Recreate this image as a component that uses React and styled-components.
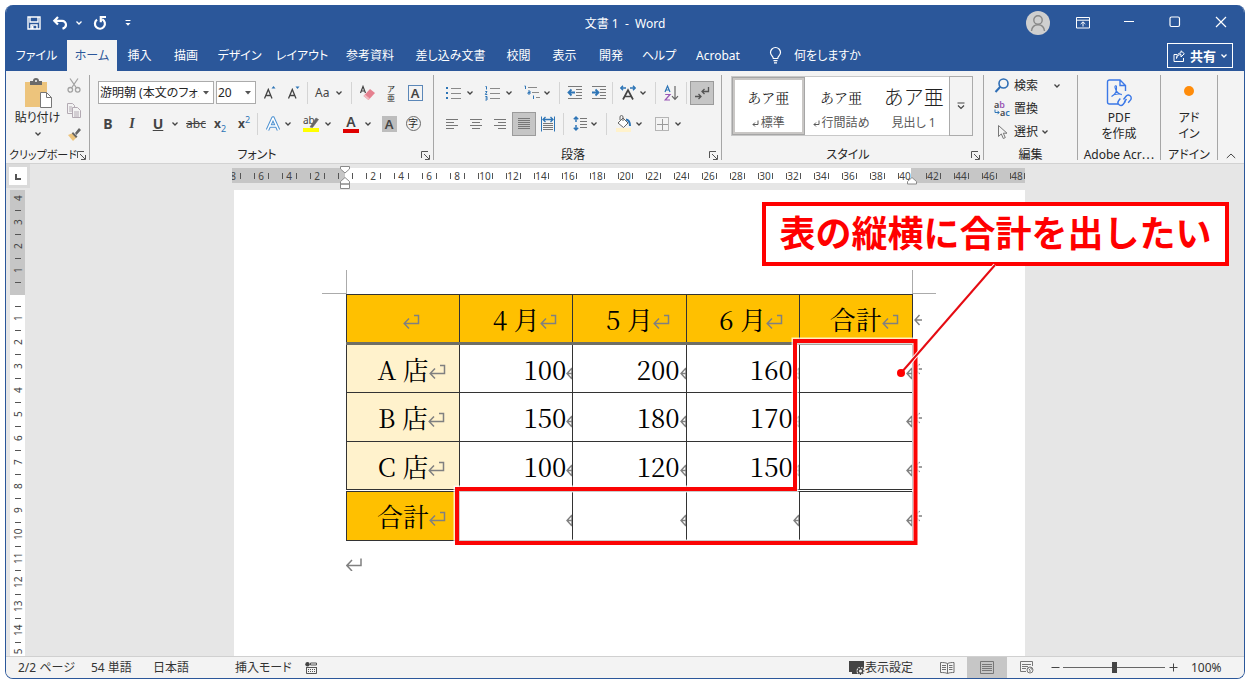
import React from "react";
import styled, { createGlobalStyle, css } from "styled-components";

const BLUE = "#2b579a";
const INK = "#444444";
const RULE = "#c6c6c6";
const RED = "#fb0404";

const GlobalStyle = createGlobalStyle`
  *, *::before, *::after { box-sizing: border-box; }
  body {
    margin: 0;
    background: #ffffff;
    color: #262626;
    font-family: "Noto Sans", "Noto Sans CJK JP", sans-serif;
    font-feature-settings: "palt";
    font-size: 12px;
    line-height: 16px;
  }
  button, input, select {
    font: inherit;
    font-feature-settings: inherit;
    color: inherit;
    margin: 0;
  }
`;

const Screen = styled.div`
  height: 100vh;
  min-height: 400px;
  padding: 5px 7px 7px 5px;
`;

const Window = styled.div`
  height: 100%;
  display: flex;
  flex-direction: column;
  overflow: hidden;
  border: 1px solid ${BLUE};
  border-top: 0;
  border-radius: 8px;
  background: #e6e6e6;
`;

/* ---------- title bar ---------- */

const PlainButton = styled.button`
  display: flex;
  align-items: center;
  justify-content: center;
  padding: 0;
  border: 0;
  background: transparent;
  white-space: nowrap;
`;

const TitleBar = styled.header`
  flex: none;
  height: 35px;
  display: grid;
  grid-template-columns: 1fr auto 1fr;
  align-items: center;
  background: ${BLUE};
  color: #ffffff;
`;

const QuickAccess = styled.div`
  display: flex;
  align-items: center;
  padding-left: 18px;
`;

const QuickButton = styled(PlainButton)`
  width: ${(p) => p.$w}px;
  height: 24px;
`;

const Title = styled.h1`
  margin: 0;
  padding-top: 2px;
  font-size: 12px;
  font-weight: 400;
  white-space: pre;
`;

const WindowControls = styled.div`
  display: flex;
  align-items: center;
  justify-content: flex-end;
`;

const Avatar = styled(PlainButton)`
  width: 24px;
  height: 24px;
  margin-right: 10px;
  border-radius: 50%;
  background: #cfcfcf;
`;

const ControlButton = styled(PlainButton)`
  width: 46px;
  height: 32px;
`;

/* ---------- tabs ---------- */

const TabBar = styled.nav`
  flex: none;
  height: 31px;
  display: flex;
  align-items: stretch;
  background: ${BLUE};
  color: #ffffff;
`;

const Tab = styled(PlainButton)`
  width: ${(p) => p.$w}px;
  ${(p) =>
    p.$active &&
    css`
      background: #f3f3f3;
      color: ${BLUE};
    `}
`;

const TellMe = styled(PlainButton)`
  gap: 12px;
  padding-left: 17px;
`;

const ShareButton = styled(PlainButton)`
  width: 66px;
  height: 25px;
  margin: 3px 11px 0 auto;
  gap: 5px;
  border: 1px solid #ffffff;
  font-size: 13px;
  font-weight: 700;
`;

/* ---------- ribbon ---------- */

const Ribbon = styled.div`
  flex: none;
  display: grid;
  grid-template-columns: 84px 344px 288px 1fr 94px 83px 57px 26px;
  height: 93px;
  background: #f3f3f3;
  border-bottom: 1px solid #d2d2d2;
`;

const Group = styled.section`
  position: relative;
  display: flex;
  flex-direction: column;
  justify-content: space-between;
  min-width: 0;
  padding: 6px 0 0 6px;

  &::after {
    content: "";
    position: absolute;
    right: 0;
    top: 4px;
    bottom: 3px;
    width: 1px;
    background: #a6a6a6;
  }
`;

const GroupFoot = styled.div`
  display: flex;
  align-items: center;
  justify-content: space-between;
  height: 16px;
  margin-left: -6px;
  padding: 0 4px 0 3px;
`;

const GroupName = styled.span`
  flex: 1;
  text-align: center;
  white-space: nowrap;
  font-size: ${(p) => (p.$narrow ? 11 : 12)}px;
`;

const Row = styled.div`
  display: flex;
  align-items: center;
  height: 31px;
  padding-left: ${(p) => p.$inset || 0}px;
`;

const Tool = styled(PlainButton)`
  flex: none;
  width: 24px;
  height: 24px;
  ${(p) =>
    p.$pressed &&
    css`
      background: #c5c5c5;
      border: 1px solid #9b9b9b;
    `}
`;

const DropTool = styled(PlainButton)`
  flex: none;
  width: ${(p) => p.$w}px;
  height: 24px;
  justify-content: space-between;
  padding: 0 6px;
`;

const Divider = styled.span`
  flex: none;
  width: ${(p) => p.$w}px;
  height: 22px;
  display: flex;
  justify-content: center;
  &::before {
    content: "";
    width: 1px;
    background: #d4d4d4;
  }
`;

const Combo = styled.label`
  display: flex;
  align-items: center;
  gap: 4px;
  width: ${(p) => p.$w}px;
  height: 23px;
  margin-right: 2px;
  padding: 0 4px 0 1px;
  border: 1px solid #ababab;
  background: #ffffff;
`;

const ComboSelect = styled.select`
  flex: 1;
  min-width: 0;
  height: 21px;
  padding: 0;
  border: 0;
  appearance: none;
  background: transparent;
  overflow: hidden;
`;

const Letter = styled.span`
  min-width: ${(p) => (p.$line === "underline" ? 16 : 0)}px;
  font-size: 14px;
  line-height: 16px;
  color: ${INK};
  font-weight: ${(p) => (p.$bold ? 700 : 400)};
  font-style: ${(p) => (p.$italic ? "italic" : "normal")};
  font-family: ${(p) => (p.$italic ? '"Liberation Serif", serif' : "inherit")};
  text-decoration: ${(p) => p.$line || "none"};
`;

const SmallLetter = styled(Letter)`
  font-size: 12px;
`;

const Script = styled.span`
  font-size: 9px;
  line-height: 9px;
  color: #2e75b6;
  align-self: ${(p) => (p.$up ? "flex-start" : "flex-end")};
  padding: 3px 0;
`;

const BarLetter = styled.span`
  width: 16px;
  font-size: 14px;
  line-height: 14px;
  font-weight: 600;
  color: ${INK};
  text-align: center;
  border-bottom: 4px solid ${(p) => p.$bar};
`;

const BoxLetter = styled.span`
  width: 15px;
  height: 16px;
  font-size: 13px;
  line-height: 14px;
  font-weight: 600;
  text-align: center;
  color: ${INK};
  border: 1px solid ${(p) => (p.$shade ? "#bdbdbd" : "#5b87b8")};
  background: ${(p) => (p.$shade ? "#bdbdbd" : "transparent")};
`;

const RoundLetter = styled.span`
  width: 15px;
  height: 15px;
  border: 1px solid #6a6a6a;
  border-radius: 50%;
  font-size: 10px;
  line-height: 12px;
  text-align: center;
`;

const Ruby = styled.span`
  display: flex;
  flex-direction: column;
  align-items: center;
  font-size: 8px;
  line-height: 9px;
`;

const Clipboard = styled.div`
  display: flex;
  padding-left: 1px;
`;

const BigButton = styled(PlainButton)`
  flex-direction: column;
  justify-content: flex-start;
  width: ${(p) => p.$w}px;
  height: 66px;
`;

const BigArt = styled.span`
  display: flex;
  align-items: center;
  justify-content: center;
  height: 33px;
`;

const BigCaption = styled.span`
  line-height: 16px;
  white-space: pre-line;
`;

const ToolColumn = styled.div`
  display: flex;
  flex-direction: column;
  margin-top: -3px;
`;

const Gallery = styled.div`
  display: flex;
  height: 60px;
  margin: -1px 11px 0 3px;
  border: 1px solid #c8c8c8;
  background: #ffffff;
`;

const StyleCard = styled.button`
  flex: 1;
  display: flex;
  flex-direction: column;
  align-items: center;
  justify-content: space-between;
  min-width: 0;
  padding: 4px 0 1px;
  border: 3px solid ${(p) => (p.$active ? "#c9c7c5" : "transparent")};
  outline: ${(p) => (p.$active ? "1px solid #a6a6a6" : "0")};
  outline-offset: -1px;
  background: transparent;
  white-space: nowrap;
`;

const StyleSample = styled.span`
  height: 26px;
  line-height: 26px;
  font-family: ${(p) =>
    p.$large ? '"Noto Sans CJK JP", sans-serif' : '"Noto Serif CJK JP", "Noto Sans CJK JP", serif'};
  font-feature-settings: normal;
  font-weight: ${(p) => (p.$large ? 300 : 400)};
  font-size: ${(p) => (p.$large ? 20 : 14)}px;
  color: #222222;
`;

const StyleName = styled.span`
  display: flex;
  align-items: center;
  gap: 2px;
  color: #595959;
`;

const GalleryMore = styled(PlainButton)`
  flex: none;
  width: 24px;
  margin: -1px;
  border: 1px solid #ababab;
  background: #f3f3f3;
`;

const EditButton = styled(PlainButton)`
  justify-content: flex-start;
  height: 23px;
  gap: 4px;
  padding-left: 4px;
`;

const EditLabel = styled.span`
  padding-right: ${(p) => (p.$wide ? 12 : 0)}px;
`;

const CollapseButton = styled(PlainButton)`
  align-self: end;
  height: 14px;
`;

/* ---------- workspace ---------- */

const Workspace = styled.main`
  flex: 1;
  min-height: 0;
  display: flex;
  overflow: hidden;
`;

const LeftRail = styled.div`
  flex: none;
  width: 24px;
  display: flex;
  flex-direction: column;
`;

const TabStop = styled(PlainButton)`
  flex: none;
  width: 24px;
  height: 24px;
  margin-bottom: 2px;
  border: 3px solid #dadada;
  background: #ffffff;
`;

const VRuler = styled.div`
  flex: 1;
  min-height: 0;
  width: 15px;
  margin-left: 4px;
  overflow: hidden;
  background: #ffffff;
`;

const VSection = styled.div`
  padding: ${(p) => (p.$dark ? "2px 0 7px" : "5px 0 0")};
  background: ${(p) => (p.$dark ? RULE : "#ffffff")};
`;

const VMark = styled.span`
  display: flex;
  align-items: center;
  justify-content: center;
  width: 15px;
  height: 12px;
  font-size: 10px;
  line-height: 12px;
  color: ${INK};
  writing-mode: vertical-rl;
  transform: rotate(180deg);
`;

const VTick = styled.span`
  display: flex;
  align-items: center;
  justify-content: center;
  height: 12px;
  &::before {
    content: "";
    width: 6px;
    height: 1px;
    background: #555555;
  }
`;

const Canvas = styled.div`
  flex: 1;
  min-width: 0;
  display: flex;
  justify-content: center;
  padding: 4px 17px 0 0;
`;

const DocColumn = styled.div`
  flex: none;
  width: 793px;
  display: flex;
  flex-direction: column;
`;

const HRuler = styled.div`
  position: relative;
  flex: none;
  display: flex;
  height: 15px;
  margin-bottom: 7px;
`;

const HSection = styled.div`
  flex: ${(p) => (p.$grow ? "1" : "none")};
  width: ${(p) => (p.$grow ? "auto" : p.$w + "px")};
  min-width: 0;
  display: flex;
  justify-content: ${(p) => (p.$end ? "flex-end" : "flex-start")};
  padding-left: ${(p) => p.$pad || 0}px;
  overflow: hidden;
  background: ${(p) => (p.$dark ? RULE : "#ffffff")};
`;

const HCell = styled.span`
  flex: none;
  width: 28px;
  display: flex;
  align-items: center;
  justify-content: center;
  font-size: 10px;
  line-height: 14px;
  padding-top: 1px;
  color: ${INK};
`;

const HTick = styled.span`
  flex: none;
  width: 1px;
  height: 6px;
  background: #555555;
`;

const HNumber = styled.span`
  width: 13px;
  display: flex;
  justify-content: center;
`;

const HHalf = styled.span`
  flex: none;
  width: 14px;
  display: flex;
  align-items: center;
  justify-content: center;
`;

const IndentMarker = styled.svg`
  position: absolute;
  top: -3px;
  left: ${(p) => p.$x}px;
`;

const Page = styled.article`
  position: relative;
  flex: 1;
  margin-left: 2px;
  padding: 80px 89px 0 88px;
  background: #ffffff;
`;

const CropRow = styled.div`
  display: flex;
  justify-content: space-between;
  height: 24px;
`;

const CropMark = styled.span`
  width: ${(p) => (p.$right ? 24 : 25)}px;
  border-bottom: 1px solid #ababab;
  border-left: ${(p) => (p.$right ? "1px solid #ababab" : "0")};
  border-right: ${(p) => (p.$right ? "0" : "1px solid #ababab")};
`;

const TableRow = styled.div`
  display: flex;
  padding-left: 24px;
`;

const SalesTable = styled.table`
  flex: none;
  width: 567px;
  table-layout: fixed;
  border-collapse: collapse;
  font-family: "Noto Serif CJK JP", "Liberation Serif", "Noto Sans CJK JP", serif;
  font-feature-settings: normal;
  font-size: 26px;
  line-height: 32px;
  font-weight: 400;
  color: #000000;

  tr { height: 49px; }
  tbody tr:last-child { height: 50px; }
  thead th, thead td { border-bottom: 3px solid #6f6f66; }
  tbody tr:nth-last-child(2) > * { border-bottom: 3px double #333333; }
`;

const cell = css`
  padding: 0;
  border: 1px solid #333333;
  overflow: hidden;
  font-weight: 400;
  white-space: nowrap;
`;

const HeadCell = styled.th`
  ${cell}
  text-align: center;
  background: ${(p) => (p.$light ? "#fff2cc" : "#ffc000")};
`;

const NumCell = styled.td`
  ${cell}
  text-align: right;
  padding-right: 6px;
`;

const RowEnds = styled.div`
  display: flex;
  flex-direction: column;
  padding-top: 1px;
`;

const RowEnd = styled.span`
  display: flex;
  align-items: center;
  height: 49px;
`;

const MarkSvg = styled.svg`
  display: inline-block;
  margin-right: -17px;
  vertical-align: 0;
`;

const Paragraph = styled.p`
  margin: 0;
  padding: 14px 0 0 24px;
  line-height: 24px;
`;

const Callout = styled.div`
  position: absolute;
  left: 528px;
  top: 12px;
  width: 467px;
  height: 64px;
  display: flex;
  align-items: center;
  justify-content: center;
  padding-bottom: 6px;
  border: 4px solid #ff0000;
  background: #ffffff;
  color: #ff0000;
  font-family: "Noto Sans CJK JP", sans-serif;
  font-feature-settings: normal;
  font-size: 36px;
  line-height: 50px;
  font-weight: 700;
  white-space: nowrap;
`;

const Markup = styled.svg`
  position: absolute;
  left: 0;
  top: 0;
  pointer-events: none;
`;

/* ---------- status bar ---------- */

const StatusBar = styled.footer`
  flex: none;
  display: flex;
  align-items: center;
  height: 22px;
  padding-left: 12px;
  border-top: 1px solid #d0d0d0;
  background: #f3f3f3;
  color: #333333;
`;

const StatusButton = styled(PlainButton)`
  justify-content: flex-start;
  min-width: ${(p) => p.$w}px;
  height: 21px;
`;

const StatusRight = styled.div`
  display: flex;
  align-items: center;
  margin-left: auto;
`;

const ViewButton = styled(PlainButton)`
  width: 40px;
  height: 21px;
  background: ${(p) => (p.$active ? "#c6c6c6" : "transparent")};
`;

const ZoomStep = styled(PlainButton)`
  width: 16px;
  height: 21px;
`;

const ZoomSlider = styled.input`
  width: 102px;
  height: 16px;
  appearance: none;
  background: transparent;
  &::-webkit-slider-runnable-track {
    height: 1px;
    background: #666666;
  }
  &::-webkit-slider-thumb {
    appearance: none;
    width: 5px;
    height: 11px;
    margin-top: -5px;
    background: #444444;
  }
`;

const ZoomValue = styled.span`
  width: 63px;
  padding-left: 10px;
`;

/* ---------- drawings ---------- */

const Svg = ({ w = 16, h = 16, children, vb, ...rest }) => (
  <svg width={w} height={h} viewBox={vb || `0 0 ${w} ${h}`} fill="none" stroke={INK} overflow="visible" aria-hidden="true" {...rest}>
    {children}
  </svg>
);

const Chevron = ({ color = INK, w = 6 }) => (
  <Svg w={w} h={6} vb="0 0 6 6" stroke={color} strokeWidth="1.3"><path d="M.5 1.5 3 4 5.5 1.5" /></Svg>
);
const Triangle = () => (
  <Svg w={6} h={4} stroke="none" fill="#555"><path d="M0 0h6L3 3.5z" /></Svg>
);
const Launcher = () => (
  <Svg w={9} h={9} stroke="#555"><path d="M.5 7V.5H7M3 3l5 5M8.5 4v4.5H4" /></Svg>
);
const Save = () => (
  <Svg w={14} h={14} stroke="#fff" strokeWidth="1.4"><path d="M1 1h12v12H1z" /><path d="M3 1v5h8V1M4 13V9h6v4" /><path d="M5.5 10v3" strokeWidth="2" /></Svg>
);
const Undo = () => (
  <Svg w={16} h={14} stroke="#fff" strokeWidth="2.2"><path d="M6 1 2.300 4.800 6 8.500M2.500 4.800h7.500a3.900 3.900 0 0 1 4 4c0 2-1.200 3.200-3.500 4" /></Svg>
);
const Redo = () => (
  <Svg w={14} h={15} stroke="#fff" strokeWidth="2.2"><path d="M9.200 4.300a5 5 0 1 1-5.200.400M13 2H7.800v5.200" /></Svg>
);
const Customize = () => (
  <Svg w={6} h={8} stroke="#fff"><path d="M.5 1.500h5" /><path d="M.5 4h5L3 6.800z" fill="#fff" stroke="none" /></Svg>
);
const Person = () => (
  <Svg w={20} h={20} stroke="#888" strokeWidth="1.400"><circle cx="10" cy="7" r="4.200" /><path d="M3.500 18c.5-4.500 3-6.300 6.500-6.300s6 1.800 6.500 6.300" /></Svg>
);
const RibbonMode = () => (
  <Svg w={14} h={12} stroke="#fff"><path d="M.5.5h13v10.500H.5zM.5 3.200h13M7 9.500V5M4.700 7 7 4.800 9.300 7" /></Svg>
);
const Minimize = () => <Svg w={12} h={4} stroke="#fff"><path d="M1 .5h10" /></Svg>;
const Maximize = () => <Svg w={12} h={12} stroke="#fff" strokeWidth="1.200"><rect x="1" y="0" width="9.500" height="9.500" rx="1.500" /></Svg>;
const Close = () => <Svg w={12} h={12} stroke="#fff" strokeWidth="1.200"><path d="M1 0 11 10M11 0 1 10" /></Svg>;
const Bulb = () => (
  <Svg w={13} h={17} stroke="#fff" strokeWidth="1.200"><path d="M4.300 11.500C4.300 9 1.500 8.500 1.500 5.500a5 5 0 0 1 10 0c0 3-2.800 3.500-2.800 6zM4.500 13.700h4M5 15.800h3" /></Svg>
);
const Share = () => (
  <Svg w={12} h={12} stroke="#fff"><path d="M4 4.500H1v7h9.500V8M3.500 8.500C4 5.500 6 4.500 8 4.500V7l3.300-3.300L8 .8v2C5 3 3.500 5.500 3.500 8.500z" /></Svg>
);

const Paste = () => (
  <Svg w={30} h={32}>
    <path d="M2 4h22v25H2z" fill="#edc47c" stroke="none" />
    <path d="M7 7V3h3a3 3 0 0 1 6 0h3v4z" fill="#6a6a6a" stroke="none" />
    <circle cx="13" cy="3" r="1" fill="#f3f3f3" stroke="none" />
    <path d="M17.500 14.500h6l5 5v10h-11z" fill="#fff" stroke="#777" />
    <path d="M23.500 14.500v5h5" stroke="#777" />
  </Svg>
);
const Scissors = () => (
  <Svg w={14} h={16} stroke="#a3a3a3" strokeWidth="1.300"><path d="M3 .5 9.500 10M11 .5 4.500 10" /><circle cx="3.300" cy="11.800" r="2.300" /><circle cx="10.700" cy="11.800" r="2.300" /></Svg>
);
const Copy = () => (
  <Svg w={14} h={15} stroke="#b3aab3"><path d="M.5.5h5l2 2v8h-7zM2 4h3M2 6h3M2 8h3" /><path d="M5.500 4.500h5l3 3v7h-8z" fill="#f3f3f3" /><path d="M7 9h5M7 11h5M7 13h5" /></Svg>
);
const Brush = () => (
  <Svg w={14} h={14} stroke="none"><path d="m1 8 5-2 4 4-4 4z" fill="#edc47c" /><path d="m6 5 4.500 4.500L9 11 4.800 6.500zM8 6l4-5 2 2-4.500 5z" fill="#666" /></Svg>
);

const GrowFont = ({ down }) => (
  <Svg w={14} h={16} strokeWidth="1.300"><path d="M1.500 13.500 5.300 4.500l3.700 9M2.900 10.500h4.800" /><path d={down ? "M8.500 1.500h4L10.500 4z" : "M8.500 3.500h4L10.500 1z"} fill="#2e75b6" stroke="none" /></Svg>
);
const Eraser = () => (
  <Svg w={16} h={16}><path d="M1.500 8 4 1.500 6.500 8M2.400 6h3.200" strokeWidth="1.200" /><path d="m4.500 11 6.500-7 5 4-6.500 7z" fill="#e5808f" stroke="none" /><path d="m4.500 11 1.500-1.500 4.800 4L9.500 15z" fill="#f3b9c0" stroke="none" /></Svg>
);
const GlowA = () => (
  <Svg w={16} h={16} strokeLinejoin="round"><path d="M2.500 14 8 2l5.500 12M4.800 10h6.400" stroke="#4f93d2" strokeWidth="3.600" /><path d="M2.500 14 8 2l5.500 12M4.800 10h6.400" stroke="#fff" strokeWidth="1.600" /></Svg>
);
const Pen = () => (
  <Svg w={16} h={18}>
    <text x="0" y="9" fontSize="10" fill={INK} stroke="none">ab</text>
    <path d="m7 12 6-9 2.500 1.500-6 8z" fill="#666" stroke="#666" strokeWidth=".6" />
    <path d="M0 13h16v4H0z" fill="#ffff00" stroke="none" />
  </Svg>
);

const Bullets = () => (
  <Svg><path d="M5 3.500h10M5 8.500h10M5 13.500h10" stroke="#8a8a8a" /><path d="M0 2h2v2H0zM0 7h2v2H0zM0 12h2v2H0z" fill="#2e75b6" stroke="none" /></Svg>
);
const Numbers = () => (
  <Svg><path d="M5 3.500h10M5 8.500h10M5 13.500h10" stroke="#8a8a8a" /><path d="M.5 1.500h1v3M.3 6.500h1.700l-1.700 3h2M.3 11.500h1.700v3.500H.3M.5 13H2" stroke="#2e75b6" strokeWidth="1" /></Svg>
);
const Multi = () => (
  <Svg><path d="M4 2.500h9M8 7.500h7M12 12.500h4" stroke="#8a8a8a" /><path d="M.5 1h1v3M4 6h2v3H4V7.500h2M9.500 10.500v3.500" stroke="#2e75b6" strokeWidth="1" /></Svg>
);
const Indent = ({ right }) => (
  <Svg>
    <path d="M1 1.500h14M9 4.500h6M9 7.500h6M9 10.500h6M1 13.500h14" stroke="#7a7a7a" />
    <path d={right ? "M1 7.500h6M4.500 4.500l3 3-3 3" : "M8 7.500H1.500M4.500 4.500l-3 3 3 3"} stroke="#2e75b6" strokeWidth="1.800" />
  </Svg>
);
const FitA = () => (
  <Svg><path d="M3 14.500 8 5l5 9.500M4.800 11.500h6.400" strokeWidth="1.700" /><path d="M.8 3H6M3 .8.800 3 3 5.200M15.200 3H10M13 .8 15.200 3 13 5.200" stroke="#2e75b6" strokeWidth="1.400" /></Svg>
);
const Sort = () => (
  <Svg w={15} h={16}><path d="M1 7 3.500 1 6 7M1.800 5h3.400" stroke="#2e75b6" strokeWidth="1.200" /><path d="M1.200 9.500H6L1.200 15H6" stroke="#9a57b5" strokeWidth="1.200" /><path d="M11 1v13M8 11.200 11 14.300l3-3.100" stroke="#666" strokeWidth="1.200" /></Svg>
);
const Marks = () => (
  <Svg stroke="#555" strokeWidth="1.300"><path d="M14.500 2v4.500H8M10.500 4 8 6.500 10.500 9M1 11.500h6M4.500 9 7 11.500 4.500 14" /></Svg>
);
const Align = ({ kind }) => {
  const d = {
    left: "M1 3.500h12M1 6.500h8M1 9.500h12M1 12.500h8",
    center: "M1 3.500h12M3 6.500h8M1 9.500h12M3 12.500h8",
    right: "M1 3.500h12M5 6.500h8M1 9.500h12M5 12.500h8",
    full: "M1 2.500h12M1 4.500h12M1 6.500h12M1 8.500h12M1 10.500h12M1 12.500h12",
  }[kind];
  return <Svg w={14} h={15} stroke="#777"><path d={d} /></Svg>;
};
const Distribute = () => (
  <Svg w={16} h={16}><path d="M1.500.5v15M14.500.5v15" stroke="#2e75b6" /><path d="M3 7.500h10M3 9.500h10M3 11.500h10M3 13.500h10" stroke="#777" /><path d="M3 3.500h10M5.500 1 3 3.500 5.500 6M10.500 1 13 3.500 10.500 6" stroke="#2e75b6" strokeWidth="1.300" /></Svg>
);
const LineSpace = () => (
  <Svg><path d="M7 2.500h7M7 5.500h7M7 8.500h7M7 11.500h7" stroke="#777" /><path d="M3 1v5M.800 3.200 3 1l2.200 2.200M3 9v5M.800 11.800 3 14l2.200-2.200" stroke="#2e75b6" strokeWidth="1.500" /></Svg>
);
const Bucket = () => (
  <Svg w={16} h={18}><path d="M0 13h15v4H0z" fill="#fff2cc" stroke="none" /><path d="m2 8 5-5 5 5-4.500 4.500z" fill="#fff" stroke="#666" /><path d="M7 6V2a1.500 1.500 0 0 0-3 0v3" stroke="#666" /><path d="M10 4.500c3 .5 4 2.500 4 6.500" stroke="#2e75b6" strokeWidth="2" /></Svg>
);
const Borders = () => (
  <Svg w={16} h={16} stroke="#777"><path d="M1.500 1.500h13v13h-13z" strokeDasharray="1 1" /><path d="M8.500 3v11M3 8.500h11" stroke="#999" /></Svg>
);
const ReturnSmall = () => (
  <Svg w={7} h={7} stroke="#595959"><path d="M6 .5v4H1M3 2.500 1 4.500l2 2" /></Svg>
);
const MoreStyles = () => <Svg w={8} h={8}><path d="M.5 1h7M1 3.500 4 6.500l3-3" strokeWidth="1.200" /></Svg>;

const Search = () => (
  <Svg w={16} h={16} stroke="#2f6eb5" strokeWidth="1.600"><circle cx="9.500" cy="5.500" r="4.500" /><path d="M6.300 8.800 1.500 14" strokeWidth="2" /></Svg>
);
const Replace = () => (
  <Svg w={16} h={18}>
    <text x="0" y="8" fontSize="9" fontWeight="600" fill={INK} stroke="none">a<tspan fill="#9a57b5">b</tspan></text>
    <text x="6" y="16" fontSize="9" fontWeight="600" fill={INK} stroke="none">a<tspan fill="#2e75b6">c</tspan></text>
    <path d="M1 9.500v3h4M3.500 10.800l1.700 1.700-1.700 1.700" stroke="#2e75b6" />
  </Svg>
);
const Pointer = () => (
  <Svg w={16} h={16} stroke="#777"><path d="M4.500 1.500v11l2.800-2.600 2 4.600 2-.9-2-4.400h3.700z" /></Svg>
);
const Pdf = () => (
  <Svg w={28} h={30} stroke="#3b78e7" strokeWidth="1.400">
    <path d="M13 25H4.500a2 2 0 0 1-2-2V3a2 2 0 0 1 2-2H15l5.500 5.500V12M15 1v5.500h5.500" />
    <path d="M6.500 17.500c4-2 5.500-5.500 5-9.500 0-2-2-1.500-1.500.5.800 3.200 3 6.500 7 7.200M6.500 17.500c2.500-2.500 6-3 10-2.200" strokeWidth="1.100" />
    <path d="m18.500 20.500 2.500-3.200a2.900 2.900 0 0 1 4.600 3.600l-2.400 2.900M21.500 20l-2.200 3M20.500 22.300l-2.300 3a2.900 2.900 0 0 1-4.600-3.600l1.700-2.200" />
  </Svg>
);
const OrangeDot = () => <Svg w={12} h={18} stroke="none"><circle cx="6" cy="6" r="5" fill="#ff8c0a" /></Svg>;
const Collapse = () => <Svg w={10} h={6}><path d="m.8 5 4.200-4 4.200 4" /></Svg>;
const TabL = () => <Svg w={8} h={8} stroke="#555" strokeWidth="2"><path d="M2 2v5h5" /></Svg>;

const MacroIcon = () => (
  <Svg w={13} h={12} stroke="#555"><path d="M1.500 5v6.500h10V5M5.500 1h6v2h-6zM1.500 5.500h10" /><path d="M3 7.500h8M3 9.500h8" strokeDasharray="1 1" /><circle cx="2.500" cy="2.200" r="2.200" fill="#444" stroke="none" /></Svg>
);
const Display = () => (
  <Svg w={16} h={15} stroke="none"><path d="M0 1h15v11H0z" fill="#444" /><path d="M3 12h6v2H3z" fill="#444" /><circle cx="11.500" cy="11" r="3.900" fill="#f3f3f3" /><circle cx="11.500" cy="11" r="2.200" stroke="#444" strokeWidth="1.400" fill="none" /><path d="M11.500 7v1.500M11.500 13.500V15M7.500 11H9M14 11h1.500M8.700 8.200l1 1M13.300 12.800l1 1M14.300 8.200l-1 1M9.700 12.800l-1 1" stroke="#444" strokeWidth="1.200" /></Svg>
);
const ReadView = () => (
  <Svg w={15} h={12} stroke="#6f6f6f"><path d="M7.500 1.500C5.500.500 3 .500.500.500v10c2.500 0 5 0 7 1 2-1 4.500-1 6.500-1V.500c-2 0-4.500 0-6.500 1zv10M2 3.500h4M2 5.500h4M2 7.500h4M9 3.500h3.500M9 5.500h3.500M9 7.500h3.500" /></Svg>
);
const PrintView = () => (
  <Svg w={14} h={13} stroke="#777"><path d="M.500.500h13v12H.500zM2 3.500h10M2 5.500h10M2 7.500h10M2 9.500h10" /></Svg>
);
const WebView = () => (
  <Svg w={14} h={13} stroke="#777"><path d="M12.500 5V.500H.500v10H6M2 3.500h9M2 5.500h6M2 7.500h4" /><circle cx="10" cy="9" r="3" fill="#f3f3f3" /><path d="M8.500 7.500 10 9v2M11 6.500V8h1.500" /></Svg>
);

const ReturnMark = () => (
  <MarkSvg width="17" height="16" viewBox="0 0 17 16" fill="none" stroke="#808080" strokeWidth="1.500" aria-hidden="true">
    <path d="M11 1.500h4.500v8H1.500M6 4.500l-4.800 5 4.800 5" />
  </MarkSvg>
);
const ParagraphMark = () => (
  <MarkSvg width="17" height="16" viewBox="0 0 17 16" fill="none" stroke="#808080" strokeWidth="1.500" aria-hidden="true">
    <path d="M15 3.500v7H1M6 5 .9 10.500 6 16" />
  </MarkSvg>
);
const CellMark = () => (
  <MarkSvg width="17" height="16" viewBox="0 0 17 16" fill="none" stroke="#808080" strokeWidth="1.400" aria-hidden="true">
    <path d="M6 4 1 9.500 6 15M1 9.500h14M6 4v11" />
  </MarkSvg>
);

/* ---------- data ---------- */

const tabs = [
  ["ファイル", 61], ["ホーム", 50], ["挿入", 45], ["描画", 48], ["デザイン", 59], ["レイアウト", 66],
  ["参考資料", 70], ["差し込み文書", 91], ["校閲", 45], ["表示", 47], ["開発", 46], ["ヘルプ", 50], ["Acrobat", 68],
];
const months = [4, 5, 6];
const shops = [
  ["A", [100, 200, 160]],
  ["B", [150, 180, 170]],
  ["C", [100, 120, 150]],
];
const evens = (from, to) => Array.from({ length: (to - from) / 2 + 1 }, (_, i) => from + i * 2);
const upTo = (n) => Array.from({ length: n }, (_, i) => i + 1);

const Drop = ({ w, label, children }) => (
  <DropTool $w={w} aria-label={label}>{children}<Chevron /></DropTool>
);
const Foot = ({ name, launcher, narrow }) => (
  <GroupFoot><GroupName $narrow={narrow}>{name}</GroupName>{launcher && <Launcher />}</GroupFoot>
);
const RulerCells = ({ values }) =>
  values.map((n) => (
    <HCell key={n}><HTick /><HNumber>{n}</HNumber><HTick /></HCell>
  ));

function RibbonPanel() {
  return (
    <Ribbon>
      <Group>
        <Clipboard>
          <BigButton $w={49}>
            <BigArt><Paste /></BigArt>
            <BigCaption>貼り付け</BigCaption>
            <Svg w={6} h={12} strokeWidth="1.300"><path d="M.5 6.500 3 9l2.500-2.500" /></Svg>
          </BigButton>
          <ToolColumn>
            <Tool aria-label="切り取り"><Scissors /></Tool>
            <Tool aria-label="コピー"><Copy /></Tool>
            <Tool aria-label="書式のコピー"><Brush /></Tool>
          </ToolColumn>
        </Clipboard>
        <Foot name="クリップボード" launcher narrow />
      </Group>

      <Group>
        <div>
          <Row $inset={2}>
            <Combo $w={116}>
              <ComboSelect aria-label="フォント"><option>游明朝 (本文のフォント)</option></ComboSelect><Triangle />
            </Combo>
            <Combo $w={40}>
              <ComboSelect aria-label="フォント サイズ"><option>20</option></ComboSelect><Triangle />
            </Combo>
            <Tool aria-label="拡大"><GrowFont /></Tool>
            <Tool aria-label="縮小"><GrowFont down /></Tool>
            <Divider $w={3} />
            <Drop w={39} label="文字種の変換"><SmallLetter>Aa</SmallLetter></Drop>
            <Divider $w={7} />
            <Tool aria-label="書式のクリア"><Eraser /></Tool>
            <Tool aria-label="ルビ"><Ruby><span>ア</span><span>亜</span></Ruby></Tool>
            <Tool aria-label="囲み線"><BoxLetter>A</BoxLetter></Tool>
          </Row>
          <Row>
            <Tool><Letter $bold>B</Letter></Tool>
            <Tool><Letter $bold $italic>I</Letter></Tool>
            <Drop w={40} label="下線"><Letter $bold $line="underline">U</Letter></Drop>
            <Tool><SmallLetter $line="line-through">abc</SmallLetter></Tool>
            <Tool><SmallLetter $bold>x</SmallLetter><Script>2</Script></Tool>
            <Tool><SmallLetter $bold>x</SmallLetter><Script $up>2</Script></Tool>
            <Divider $w={3} />
            <Drop w={38} label="文字の効果"><GlowA /></Drop>
            <Drop w={40} label="蛍光ペン"><Pen /></Drop>
            <Drop w={40} label="フォントの色"><BarLetter $bar="#e00000">A</BarLetter></Drop>
            <Tool><BoxLetter $shade>A</BoxLetter></Tool>
            <Tool><RoundLetter>字</RoundLetter></Tool>
          </Row>
        </div>
        <Foot name="フォント" launcher />
      </Group>

      <Group>
        <div>
          <Row>
            <Drop w={39} label="箇条書き"><Bullets /></Drop>
            <Drop w={39} label="段落番号"><Numbers /></Drop>
            <Drop w={38} label="アウトライン"><Multi /></Drop>
            <Divider $w={7} />
            <Tool aria-label="インデントを減らす"><Indent /></Tool>
            <Tool aria-label="インデントを増やす"><Indent right /></Tool>
            <Divider $w={3} />
            <Drop w={38} label="拡張書式"><FitA /></Drop>
            <Divider $w={7} />
            <Tool aria-label="並べ替え"><Sort /></Tool>
            <Divider $w={7} />
            <Tool $pressed aria-label="編集記号の表示"><Marks /></Tool>
          </Row>
          <Row>
            <Tool aria-label="左揃え"><Align kind="left" /></Tool>
            <Tool aria-label="中央揃え"><Align kind="center" /></Tool>
            <Tool aria-label="右揃え"><Align kind="right" /></Tool>
            <Tool $pressed aria-label="両端揃え"><Align kind="full" /></Tool>
            <Tool aria-label="均等割り付け"><Distribute /></Tool>
            <Divider $w={7} />
            <Drop w={36} label="行間"><LineSpace /></Drop>
            <Divider $w={7} />
            <Drop w={38} label="塗りつぶし"><Bucket /></Drop>
            <Drop w={39} label="罫線"><Borders /></Drop>
          </Row>
        </div>
        <Foot name="段落" launcher />
      </Group>

      <Group>
        <Gallery>
          <StyleCard $active><StyleSample>あア亜</StyleSample><StyleName><ReturnSmall />標準</StyleName></StyleCard>
          <StyleCard><StyleSample>あア亜</StyleSample><StyleName><ReturnSmall />行間詰め</StyleName></StyleCard>
          <StyleCard><StyleSample $large>あア亜</StyleSample><StyleName>見出し 1</StyleName></StyleCard>
          <GalleryMore aria-label="その他"><MoreStyles /></GalleryMore>
        </Gallery>
        <Foot name="スタイル" launcher />
      </Group>

      <Group>
        <ToolColumn>
          <EditButton><Search /><EditLabel $wide>検索</EditLabel><Chevron /></EditButton>
          <EditButton><Replace /><EditLabel>置換</EditLabel></EditButton>
          <EditButton><Pointer /><EditLabel>選択</EditLabel><Chevron /></EditButton>
        </ToolColumn>
        <Foot name="編集" />
      </Group>

      <Group>
        <BigButton $w={70}><BigArt><Pdf /></BigArt><BigCaption>{"PDF\nを作成"}</BigCaption></BigButton>
        <Foot name="Adobe Acr⋯" />
      </Group>

      <Group>
        <BigButton $w={44}><BigArt><OrangeDot /></BigArt><BigCaption>{"アド\nイン"}</BigCaption></BigButton>
        <Foot name="アドイン" />
      </Group>

      <CollapseButton aria-label="リボンを折りたたむ"><Collapse /></CollapseButton>
    </Ribbon>
  );
}

function Sales() {
  return (
    <TableRow>
      <SalesTable>
        <thead>
          <tr>
            <HeadCell as="td"><ReturnMark /></HeadCell>
            {months.map((m) => (
              <HeadCell key={m} scope="col">{m} 月<ReturnMark /></HeadCell>
            ))}
            <HeadCell scope="col">合計<ReturnMark /></HeadCell>
          </tr>
        </thead>
        <tbody>
          {shops.map(([name, sales]) => (
            <tr key={name}>
              <HeadCell scope="row" $light>{name} 店<ReturnMark /></HeadCell>
              {sales.map((v, i) => <NumCell key={i}>{v}<CellMark /></NumCell>)}
              <NumCell><CellMark /></NumCell>
            </tr>
          ))}
          <tr>
            <HeadCell scope="row">合計<ReturnMark /></HeadCell>
            {upTo(4).map((i) => <NumCell key={i}><CellMark /></NumCell>)}
          </tr>
        </tbody>
      </SalesTable>
      <RowEnds>
        {upTo(5).map((i) => (
          <RowEnd key={i}>
            <Svg w={10} h={14} stroke="#808080" strokeWidth="1.400"><path d="M6.500 2 2 7l4.500 5M2 7h7" /></Svg>
          </RowEnd>
        ))}
      </RowEnds>
    </TableRow>
  );
}

function Annotation() {
  const outline = "M561 151H681.500V353H223V299H561Z";
  return (
    <>
      <Callout>表の縦横に合計を出したい</Callout>
      <Markup width="791" height="370" viewBox="0 0 791 370" fill="none" aria-hidden="true">
        <path d={outline} stroke="#ffffff" strokeOpacity=".75" strokeWidth="7" />
        <path d={outline} stroke={RED} strokeWidth="4" />
        <path d="M761 75 667 183" stroke="#ffffff" strokeWidth="4" />
        <path d="M761 75 667 183" stroke="#e50b12" strokeWidth="2" />
        <circle cx="667" cy="183" r="4" fill="#ff0000" />
      </Markup>
    </>
  );
}

export default function App() {
  return (
    <Screen>
      <GlobalStyle />
      <Window>
        <TitleBar>
          <QuickAccess>
            <QuickButton $w={20} aria-label="保存"><Save /></QuickButton>
            <QuickButton $w={32} aria-label="元に戻す"><Undo /></QuickButton>
            <QuickButton $w={6} aria-label="元に戻す履歴"><Chevron color="#fff" /></QuickButton>
            <QuickButton $w={36} aria-label="やり直し"><Redo /></QuickButton>
            <QuickButton $w={20} aria-label="カスタマイズ"><Customize /></QuickButton>
          </QuickAccess>
          <Title>{"文書 1  -  Word"}</Title>
          <WindowControls>
            <Avatar aria-label="アカウント"><Person /></Avatar>
            <ControlButton aria-label="リボンの表示"><RibbonMode /></ControlButton>
            <ControlButton aria-label="最小化"><Minimize /></ControlButton>
            <ControlButton aria-label="最大化"><Maximize /></ControlButton>
            <ControlButton aria-label="閉じる"><Close /></ControlButton>
          </WindowControls>
        </TitleBar>

        <TabBar>
          {tabs.map(([name, w]) => (
            <Tab key={name} $w={w} $active={name === "ホーム"}>{name}</Tab>
          ))}
          <TellMe><Bulb />何をしますか</TellMe>
          <ShareButton><Share />共有<Chevron color="#fff" /></ShareButton>
        </TabBar>

        <RibbonPanel />

        <Workspace>
          <LeftRail>
            <TabStop aria-label="タブ"><TabL /></TabStop>
            <VRuler>
              <VSection $dark>
                {[4, 3, 2, 1].map((n) => <React.Fragment key={n}><VMark>{n}</VMark><VTick /></React.Fragment>)}
              </VSection>
              <VSection>
                {upTo(15).map((n) => <React.Fragment key={n}><VTick /><VMark>{n}</VMark></React.Fragment>)}
              </VSection>
            </VRuler>
          </LeftRail>
          <Canvas>
            <DocColumn>
              <HRuler>
                <HSection $dark $end $w={113}>
                  <RulerCells values={[8, 6, 4, 2]} />
                  <HHalf><HTick /></HHalf>
                </HSection>
                <HSection $w={566}>
                  <HHalf><HTick /></HHalf>
                  <RulerCells values={evens(2, 40)} />
                </HSection>
                <HSection $dark $grow $pad={8}>
                  <RulerCells values={evens(42, 48)} />
                </HSection>
                <IndentMarker $x={108} width="10" height="25" viewBox="0 0 10 25" fill="#fff" stroke="#8a8a8a" aria-hidden="true">
                  <path d="M.5 1.500h9V4L5 8 .5 4zM5 12.500l4.500 4v2.500H.5v-2.500zM.5 19h9v4.500h-9z" />
                </IndentMarker>
                <IndentMarker $x={675} width="10" height="25" viewBox="0 0 10 25" fill="#fff" stroke="#8a8a8a" aria-hidden="true">
                  <path d="m5 12.500 4.500 4v2.500H.5v-2.500z" />
                </IndentMarker>
              </HRuler>
              <Page>
                <CropRow><CropMark /><CropMark $right /></CropRow>
                <Sales />
                <Paragraph><ParagraphMark /></Paragraph>
                <Annotation />
              </Page>
            </DocColumn>
          </Canvas>
        </Workspace>

        <StatusBar>
          <StatusButton $w={73}>2/2 ページ</StatusButton>
          <StatusButton $w={62}>54 単語</StatusButton>
          <StatusButton $w={82}>日本語</StatusButton>
          <StatusButton $w={70}>挿入モード</StatusButton>
          <StatusButton aria-label="マクロの記録"><MacroIcon /></StatusButton>
          <StatusRight>
            <StatusButton $w={78}><Display />表示設定</StatusButton>
            <ViewButton aria-label="閲覧モード"><ReadView /></ViewButton>
            <ViewButton $active aria-label="印刷レイアウト"><PrintView /></ViewButton>
            <ViewButton aria-label="Web レイアウト"><WebView /></ViewButton>
            <ZoomStep aria-label="縮小"><Svg w={9} h={9}><path d="M.5 4.500h8" /></Svg></ZoomStep>
            <ZoomSlider type="range" aria-label="ズーム" min="0" max="200" defaultValue="100" />
            <ZoomStep aria-label="拡大"><Svg w={9} h={9}><path d="M.5 4.500h8M4.500.500v8" /></Svg></ZoomStep>
            <ZoomValue>100%</ZoomValue>
          </StatusRight>
        </StatusBar>
      </Window>
    </Screen>
  );
}
